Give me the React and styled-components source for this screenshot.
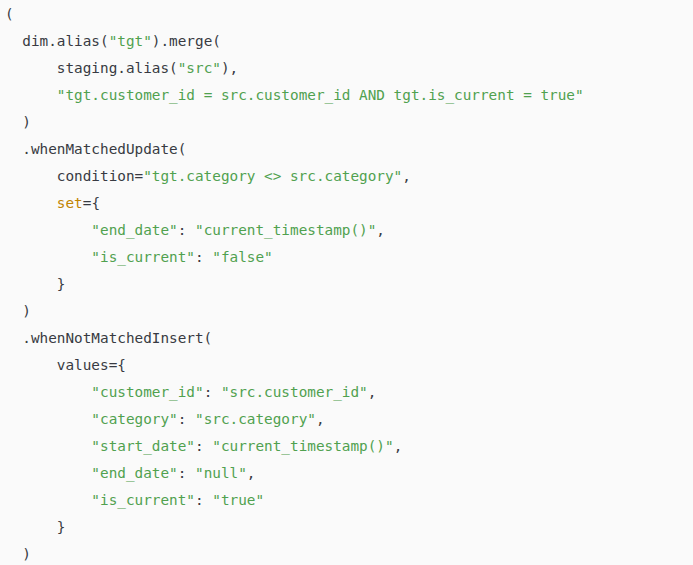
import React from "react";
import styled, { createGlobalStyle } from "styled-components";

const Global = createGlobalStyle`
  html, body { margin: 0; padding: 0; background: #fafafa; }
  #root { width: 693px; height: 565px; overflow: hidden; }
`;

const CodeBlock = styled.pre`
  margin: 0;
  padding: 1px 0 0 5px;
  background: #fafafa;
  height: 565px;
  box-sizing: border-box;
  font-family: "DejaVu Sans Mono", "Liberation Mono", monospace;
  font-size: 14.35px;
  line-height: 27px;
  color: #383a42;
  white-space: pre;
`;

const Line = styled.div`
  height: 27px;
`;

const Str = styled.span`
  color: #50a14f;
`;

const Builtin = styled.span`
  color: #c18401;
`;

const S = ({ children }) => <Str>{children}</Str>;

export default function App() {
  return (
    <>
      <Global />
      <CodeBlock>
        <Line>(</Line>
        <Line>  dim.alias(<S>"tgt"</S>).merge(</Line>
        <Line>      staging.alias(<S>"src"</S>),</Line>
        <Line>      <S>"tgt.customer_id = src.customer_id AND tgt.is_current = true"</S></Line>
        <Line>  )</Line>
        <Line>  .whenMatchedUpdate(</Line>
        <Line>      condition=<S>"tgt.category &lt;&gt; src.category"</S>,</Line>
        <Line>      <Builtin>set</Builtin>={"{"}</Line>
        <Line>          <S>"end_date"</S>: <S>"current_timestamp()"</S>,</Line>
        <Line>          <S>"is_current"</S>: <S>"false"</S></Line>
        <Line>      {"}"}</Line>
        <Line>  )</Line>
        <Line>  .whenNotMatchedInsert(</Line>
        <Line>      values={"{"}</Line>
        <Line>          <S>"customer_id"</S>: <S>"src.customer_id"</S>,</Line>
        <Line>          <S>"category"</S>: <S>"src.category"</S>,</Line>
        <Line>          <S>"start_date"</S>: <S>"current_timestamp()"</S>,</Line>
        <Line>          <S>"end_date"</S>: <S>"null"</S>,</Line>
        <Line>          <S>"is_current"</S>: <S>"true"</S></Line>
        <Line>      {"}"}</Line>
        <Line>  )</Line>
      </CodeBlock>
    </>
  );
}
